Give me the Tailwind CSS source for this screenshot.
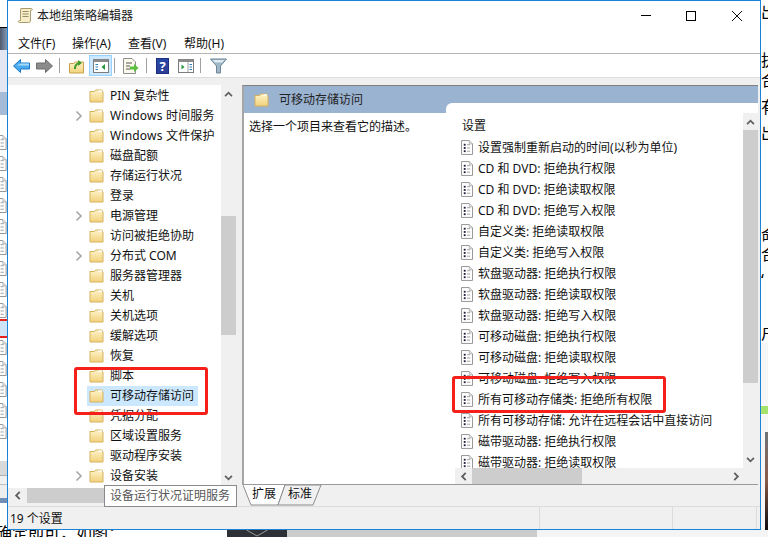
<!DOCTYPE html>
<html lang="zh-CN">
<head>
<meta charset="utf-8">
<script src="https://cdn.jsdelivr.net/npm/@tailwindcss/browser@4"></script>
</head>
<body class="bg-white">
<svg width="0" height="0" class="absolute">
  <defs>
    <linearGradient id="fg" x1="0" y1="0" x2="0" y2="1"><stop offset="0" stop-color="#fdf3c8"/><stop offset="1" stop-color="#f2d27c"/></linearGradient>
    <symbol id="folder" viewBox="0 0 15 14">
      <path d="M1 2.5 L5.5 2.5 L6.5 1 L13 1 L13.5 3 L14 3 L14 13 L1 13 Z" fill="url(#fg)" stroke="#d6b15e" stroke-width="1"/>
      <path d="M9.5 1.2 H13.2 V3 H9 Z" fill="#fff" opacity=".8"/>
    </symbol>
    <symbol id="doc" viewBox="0 0 13 16">
      <path d="M.5.5 H9 L12.5 4 V15.5 H.5 Z" fill="#fff" stroke="#8d8d8d"/>
      <path d="M9 .5 V4 H12.5" fill="#e6e6e6" stroke="#b5b5b5"/>
      <rect x="3" y="4" width="2" height="2" fill="#1e1e3c"/>
      <rect x="3" y="7.5" width="2" height="2" fill="#1e1e3c"/>
      <rect x="3" y="11" width="2" height="2" fill="#1e1e3c"/>
      <path d="M6.5 5 H10 M6.5 8.5 H10 M6.5 12 H10" stroke="#9a9a9a"/>
    </symbol>
    <symbol id="chev" viewBox="0 0 8 12"><path d="M1.5 1.5 L6 6 L1.5 10.5" fill="none" stroke="#a6a6a6" stroke-width="1.6"/></symbol>
    <symbol id="up" viewBox="0 0 10 7"><path d="M1 6 L5 2 L9 6" fill="none" stroke="#5f5f5f" stroke-width="2"/></symbol>
    <symbol id="down" viewBox="0 0 10 7"><path d="M1 1 L5 5 L9 1" fill="none" stroke="#5f5f5f" stroke-width="2"/></symbol>
    <symbol id="left" viewBox="0 0 7 10"><path d="M6 1 L2 5 L6 9" fill="none" stroke="#5f5f5f" stroke-width="2"/></symbol>
    <symbol id="right" viewBox="0 0 7 10"><path d="M1 1 L5 5 L1 9" fill="none" stroke="#5f5f5f" stroke-width="2"/></symbol>
  </defs>
</svg>

<div class="flex flex-col w-[768px] h-[537px] overflow-hidden font-['Noto_Sans','Noto_Sans_CJK_SC',sans-serif] text-[12px] leading-[16px] text-[#111]">
  <div class="flex h-[530px] shrink-0">
    <!-- left sliver -->
    <div class="w-[7px] shrink-0 flex flex-col overflow-hidden">
      <div class="h-[27px] bg-white shrink-0"></div>
      <div class="h-[1px] bg-black shrink-0"></div>
      <div class="h-[22px] bg-gradient-to-r from-[#4e5b6e] to-[#8497b4] shrink-0"></div>
      <div class="h-[42px] bg-[#e4e7f1] shrink-0"></div>
      <div class="h-[23px] bg-[#a5bbd6] shrink-0"></div>
      <div class="h-[20px] bg-white shrink-0"></div>
      <div class="flex flex-col gap-[6px] shrink-0">
        <svg class="w-[13px] h-[15px] -ml-[6px] shrink-0"><use href="#doc"/></svg>
        <svg class="w-[13px] h-[15px] -ml-[6px] shrink-0"><use href="#doc"/></svg>
        <svg class="w-[13px] h-[15px] -ml-[6px] shrink-0"><use href="#doc"/></svg>
        <svg class="w-[13px] h-[15px] -ml-[6px] shrink-0"><use href="#doc"/></svg>
        <svg class="w-[13px] h-[15px] -ml-[6px] shrink-0"><use href="#doc"/></svg>
        <svg class="w-[13px] h-[15px] -ml-[6px] shrink-0"><use href="#doc"/></svg>
        <svg class="w-[13px] h-[15px] -ml-[6px] shrink-0"><use href="#doc"/></svg>
        <svg class="w-[13px] h-[15px] -ml-[6px] shrink-0"><use href="#doc"/></svg>
        <svg class="w-[13px] h-[15px] -ml-[6px] shrink-0"><use href="#doc"/></svg>
      </div>
      <div class="h-[2px] bg-[#e8231c] mt-[1px] shrink-0"></div>
      <div class="h-[15px] bg-[#cfe4f7] shrink-0"></div>
      <div class="h-[2px] bg-[#e8231c] shrink-0"></div>
      <div class="flex flex-col gap-[6px] mt-[2px] shrink-0">
        <svg class="w-[13px] h-[15px] -ml-[6px] shrink-0"><use href="#doc"/></svg>
        <svg class="w-[13px] h-[15px] -ml-[6px] shrink-0"><use href="#doc"/></svg>
        <svg class="w-[13px] h-[15px] -ml-[6px] shrink-0"><use href="#doc"/></svg>
        <svg class="w-[13px] h-[15px] -ml-[6px] shrink-0"><use href="#doc"/></svg>
        <svg class="w-[13px] h-[15px] -ml-[6px] shrink-0"><use href="#doc"/></svg>
      </div>
      <div class="h-[22px] bg-white shrink-0"></div>
      <div class="h-[14px] bg-[#d9d9d9] shrink-0"></div>
      <div class="h-[9px] bg-[#f0f0f0] shrink-0 border-t border-[#b0b0b0]"></div>
      <div class="h-[14px] bg-[#eeeeee] shrink-0 border-t border-[#c0c0c0]"></div>
      <div class="h-[5px] bg-[#6f8fb4] shrink-0"></div>
      <div class="grow bg-white"></div>
    </div>

    <!-- window -->
    <div class="relative z-10 w-[754px] h-[530px] shrink-0 flex flex-col bg-[#f0f0f0] border border-[#1883d7]">
      <!-- title -->
      <div class="h-[29px] bg-white shrink-0 flex items-center pl-[9px]">
        <svg width="17" height="17" viewBox="0 0 17 17" class="shrink-0">
          <path d="M4 1.5 H14.5 C15.5 1.5 15.5 3.5 14.5 3.5 L13.5 3.5 L13.5 13 C13.5 15 12.5 15.5 11.5 15.5 H2.5 C1 15.5 1 13.5 2.5 13.5 H3.5 V3 C3.5 2 3.5 1.5 4 1.5Z" fill="#f5ecc8" stroke="#a89a6a"/>
          <path d="M5.5 4.5 H11.5 M5.5 7 H11.5 M5.5 9.5 H11.5" stroke="#9c8e66"/>
        </svg>
        <span class="ml-[3px] text-[12px] tracking-normal text-[#222]">本地组策略编辑器</span>
        <div class="ml-auto flex items-center">
          <span class="w-[10px] h-[1px] bg-black mr-[35px]"></span>
          <span class="w-[10px] h-[10px] border border-black mr-[36px]"></span>
          <svg width="10" height="10" viewBox="0 0 10 10" class="mr-[18px]"><path d="M0 0 L10 10 M10 0 L0 10" stroke="#111" stroke-width="1"/></svg>
        </div>
      </div>
      <!-- menu -->
      <div class="h-[24px] bg-white shrink-0 flex items-center pl-[10px] pt-[4px] border-b border-[#b4b4b4]">
        <span class="w-[54px]">文件(F)</span>
        <span class="w-[56px]">操作(A)</span>
        <span class="w-[56px]">查看(V)</span>
        <span>帮助(H)</span>
      </div>
      <!-- toolbar -->
      <div class="h-[23px] bg-white shrink-0 flex items-center pl-[5px]">
        <svg width="17" height="14" viewBox="0 0 17 14"><path d="M0.5 7 L7.5 .5 V4 H16.5 V10 H7.5 V13.5 Z" fill="#4aa9ee" stroke="#1b78c8"/><path d="M7.5 4.5 H16 V6.5 H3.5" fill="#a4dbfb"/></svg>
        <svg width="17" height="14" viewBox="0 0 17 14" class="ml-[6px]"><path d="M16.5 7 L9.5 .5 V4 H.5 V10 H9.5 V13.5 Z" fill="#8b8b8b" stroke="#6d6d6d"/></svg>
        <span class="w-[1px] h-[15px] bg-[#a0a0a0] ml-[6px]"></span>
        <svg width="15" height="16" viewBox="0 0 15 16" class="ml-[9px]">
          <path d="M.5 5.5 H5 L6 4 H14.5 V15 H.5 Z" fill="url(#fg)" stroke="#c9a24e"/>
          <path d="M5 11 C5 7 7 5 9 4.5 V2 L13 5 L9 8 V6.5 C8 7 7 8.5 7 11 Z" fill="#3f9b2c"/>
        </svg>
        <div class="ml-[5px] w-[23px] h-[21px] bg-[#cce8ff] border border-[#99d1ff] flex items-center justify-center">
          <svg width="16" height="14" viewBox="0 0 16 14">
            <rect x=".5" y=".5" width="15" height="13" fill="#fff" stroke="#7d7d7d"/>
            <rect x=".5" y=".5" width="15" height="2.5" fill="#8b8b8b"/>
            <path d="M2.5 5.5 H5 M2.5 8 H5 M2.5 10.5 H5" stroke="#2a7fb8"/>
            <path d="M12 5 V11 L8.5 8 Z" fill="#28963c"/>
          </svg>
        </div>
        <span class="w-[1px] h-[15px] bg-[#a0a0a0] ml-[2px]"></span>
        <svg width="16" height="16" viewBox="0 0 16 16" class="ml-[8px]">
          <path d="M.5.5 H9 L12.5 4 V15.5 H.5 Z" fill="#fbf9ec" stroke="#8d8d8d"/>
          <path d="M3 5 H9 M3 8 H7 M3 11 H7" stroke="#555"/>
          <path d="M7 8.5 H11 V6 L15.5 10 L11 14 V11.5 H7 Z" fill="#5cbf3c"/>
        </svg>
        <span class="w-[1px] h-[15px] bg-[#a0a0a0] ml-[7px]"></span>
        <div class="ml-[9px] w-[13px] h-[16px] bg-gradient-to-b from-[#2747a8] to-[#2c3f96] border border-[#1d2f80] text-white font-bold text-[13px] leading-[14px] text-center">?</div>
        <svg width="16" height="14" viewBox="0 0 16 14" class="ml-[9px]">
          <rect x=".5" y=".5" width="15" height="13" fill="#fff" stroke="#7d7d7d"/>
          <rect x=".5" y=".5" width="15" height="2.5" fill="#8b8b8b"/>
          <path d="M3.5 5.5 V10.5 L6.5 8 Z" fill="#28963c"/>
          <path d="M10 3 V13" stroke="#a0a0a0"/>
          <path d="M11.5 5.5 H14 M11.5 8 H14 M11.5 10.5 H14" stroke="#2a7fb8"/>
        </svg>
        <span class="w-[1px] h-[15px] bg-[#a0a0a0] ml-[6px]"></span>
        <svg width="17" height="16" viewBox="0 0 17 16" class="ml-[9px]"><path d="M.5 1 H16.5 L10.5 8 V15 H6.5 V8 Z" fill="#9fb8c9" stroke="#6f8594"/><path d="M2.5 2 H14.5 L12 4.5 H5 Z" fill="#dfeaf1"/></svg>
      </div>
      <!-- band -->
      <div class="h-[8px] bg-[#f0f0f0] border-t border-[#dedede] shrink-0"></div>

      <!-- content -->
      <div class="flex h-[421px] shrink-0">
        <!-- tree -->
        <div class="relative w-[229px] shrink-0 flex flex-col">
          <div class="flex h-[403px] shrink-0">
            <div class="w-[213px] h-[403px] bg-white overflow-hidden shrink-0 pt-[1px]">
              <div class="h-[20px] flex items-center pl-[81px]"><svg class="w-[15px] h-[14px]"><use href="#folder"/></svg><span class="ml-[6px]">PIN 复杂性</span></div>
              <div class="h-[20px] flex items-center pl-[67px]"><svg class="w-[8px] h-[12px] mr-[6px]"><use href="#chev"/></svg><svg class="w-[15px] h-[14px]"><use href="#folder"/></svg><span class="ml-[6px] tracking-[0.2px]">Windows 时间服务</span></div>
              <div class="h-[20px] flex items-center pl-[81px]"><svg class="w-[15px] h-[14px]"><use href="#folder"/></svg><span class="ml-[6px] tracking-[0.2px]">Windows 文件保护</span></div>
              <div class="h-[20px] flex items-center pl-[81px]"><svg class="w-[15px] h-[14px]"><use href="#folder"/></svg><span class="ml-[6px]">磁盘配额</span></div>
              <div class="h-[20px] flex items-center pl-[81px]"><svg class="w-[15px] h-[14px]"><use href="#folder"/></svg><span class="ml-[6px]">存储运行状况</span></div>
              <div class="h-[20px] flex items-center pl-[81px]"><svg class="w-[15px] h-[14px]"><use href="#folder"/></svg><span class="ml-[6px]">登录</span></div>
              <div class="h-[20px] flex items-center pl-[67px]"><svg class="w-[8px] h-[12px] mr-[6px]"><use href="#chev"/></svg><svg class="w-[15px] h-[14px]"><use href="#folder"/></svg><span class="ml-[6px]">电源管理</span></div>
              <div class="h-[20px] flex items-center pl-[81px]"><svg class="w-[15px] h-[14px]"><use href="#folder"/></svg><span class="ml-[6px]">访问被拒绝协助</span></div>
              <div class="h-[20px] flex items-center pl-[67px]"><svg class="w-[8px] h-[12px] mr-[6px]"><use href="#chev"/></svg><svg class="w-[15px] h-[14px]"><use href="#folder"/></svg><span class="ml-[6px]">分布式 COM</span></div>
              <div class="h-[20px] flex items-center pl-[81px]"><svg class="w-[15px] h-[14px]"><use href="#folder"/></svg><span class="ml-[6px]">服务器管理器</span></div>
              <div class="h-[20px] flex items-center pl-[81px]"><svg class="w-[15px] h-[14px]"><use href="#folder"/></svg><span class="ml-[6px]">关机</span></div>
              <div class="h-[20px] flex items-center pl-[81px]"><svg class="w-[15px] h-[14px]"><use href="#folder"/></svg><span class="ml-[6px]">关机选项</span></div>
              <div class="h-[20px] flex items-center pl-[81px]"><svg class="w-[15px] h-[14px]"><use href="#folder"/></svg><span class="ml-[6px]">缓解选项</span></div>
              <div class="h-[20px] flex items-center pl-[81px]"><svg class="w-[15px] h-[14px]"><use href="#folder"/></svg><span class="ml-[6px]">恢复</span></div>
              <div class="h-[20px] flex items-center pl-[81px]"><svg class="w-[15px] h-[14px]"><use href="#folder"/></svg><span class="ml-[6px]">脚本</span></div>
              <div class="h-[20px] flex items-center pl-[81px]"><div class="flex items-center h-[20px] w-[111px] -ml-[2px] pl-[2px] bg-[#cce8ff]"><svg class="w-[15px] h-[14px]"><use href="#folder"/></svg><span class="ml-[6px]">可移动存储访问</span></div></div>
              <div class="h-[20px] flex items-center pl-[81px]"><svg class="w-[15px] h-[14px]"><use href="#folder"/></svg><span class="ml-[6px]">凭据分配</span></div>
              <div class="h-[20px] flex items-center pl-[81px]"><svg class="w-[15px] h-[14px]"><use href="#folder"/></svg><span class="ml-[6px]">区域设置服务</span></div>
              <div class="h-[20px] flex items-center pl-[81px]"><svg class="w-[15px] h-[14px]"><use href="#folder"/></svg><span class="ml-[6px]">驱动程序安装</span></div>
              <div class="h-[20px] flex items-center pl-[67px]"><svg class="w-[8px] h-[12px] mr-[6px]"><use href="#chev"/></svg><svg class="w-[15px] h-[14px]"><use href="#folder"/></svg><span class="ml-[6px]">设备安装</span></div>
            </div>
            <!-- tree vscroll -->
            <div class="w-[15px] bg-[#f0f0f0] flex flex-col shrink-0">
              <div class="h-[17px] flex items-center justify-center shrink-0"><svg class="w-[9px] h-[6px]"><use href="#up"/></svg></div>
              <div class="h-[114px] shrink-0"></div>
              <div class="h-[119px] bg-[#cdcdcd] shrink-0"></div>
              <div class="grow"></div>
              <div class="h-[17px] flex items-center justify-center shrink-0 mb-[2px]"><svg class="w-[9px] h-[6px]"><use href="#down"/></svg></div>
            </div>
          </div>
          <!-- tree hscroll -->
          <div class="h-[15px] flex w-[228px] shrink-0">
            <div class="w-[19px] flex items-center justify-center bg-[#f0f0f0]"><svg class="w-[7px] h-[9px]"><use href="#left"/></svg></div>
            <div class="w-[150px] bg-[#cdcdcd]"></div>
          </div>
          <!-- tooltip -->
          <div class="absolute left-[96px] top-[400px] w-[133px] h-[22px] bg-white border border-[#8a8a8a] text-[#575757] pl-[5px] leading-[20px] whitespace-nowrap">设备运行状况证明服务</div>
        </div>

        <!-- right -->
        <div class="ml-[5px] w-[516px] flex flex-col shrink-0">
          <div class="h-[400px] shrink-0 border-t border-t-[#808080] border-l-2 border-l-[#a6a6a6] border-b border-b-[#9a9a9a] bg-white flex flex-col">
            <div class="h-[27px] bg-[#9ab3d1] shrink-0 flex items-center pl-[10px] pt-[1px]">
              <svg class="w-[15px] h-[14px]"><use href="#folder"/></svg>
              <span class="ml-[10px] text-[#222]">可移动存储访问</span>
            </div>
            <div class="flex grow min-h-0">
              <div class="w-[202px] pl-[5px] pt-[6px] shrink-0">选择一个项目来查看它的描述。</div>
              <div class="relative grow flex flex-col -mt-[10px] bg-white rounded-tl-[6px] min-w-0">
                <div class="flex grow min-h-0">
                  <div class="grow overflow-hidden pl-[15px] pt-[26px] mt-[-11px]">
                    <div class="h-[18px] pl-[1px] text-[12px] mb-[1px]">设置</div>
                    <div class="h-[21px] flex items-center"><svg class="w-[12px] h-[15px] mr-[5px] shrink-0"><use href="#doc"/></svg><span>设置强制重新启动的时间(以秒为单位)</span></div>
                    <div class="h-[21px] flex items-center"><svg class="w-[12px] h-[15px] mr-[5px] shrink-0"><use href="#doc"/></svg><span>CD 和 DVD: 拒绝执行权限</span></div>
                    <div class="h-[21px] flex items-center"><svg class="w-[12px] h-[15px] mr-[5px] shrink-0"><use href="#doc"/></svg><span>CD 和 DVD: 拒绝读取权限</span></div>
                    <div class="h-[21px] flex items-center"><svg class="w-[12px] h-[15px] mr-[5px] shrink-0"><use href="#doc"/></svg><span>CD 和 DVD: 拒绝写入权限</span></div>
                    <div class="h-[21px] flex items-center"><svg class="w-[12px] h-[15px] mr-[5px] shrink-0"><use href="#doc"/></svg><span>自定义类: 拒绝读取权限</span></div>
                    <div class="h-[21px] flex items-center"><svg class="w-[12px] h-[15px] mr-[5px] shrink-0"><use href="#doc"/></svg><span>自定义类: 拒绝写入权限</span></div>
                    <div class="h-[21px] flex items-center"><svg class="w-[12px] h-[15px] mr-[5px] shrink-0"><use href="#doc"/></svg><span>软盘驱动器: 拒绝执行权限</span></div>
                    <div class="h-[21px] flex items-center"><svg class="w-[12px] h-[15px] mr-[5px] shrink-0"><use href="#doc"/></svg><span>软盘驱动器: 拒绝读取权限</span></div>
                    <div class="h-[21px] flex items-center"><svg class="w-[12px] h-[15px] mr-[5px] shrink-0"><use href="#doc"/></svg><span>软盘驱动器: 拒绝写入权限</span></div>
                    <div class="h-[21px] flex items-center"><svg class="w-[12px] h-[15px] mr-[5px] shrink-0"><use href="#doc"/></svg><span>可移动磁盘: 拒绝执行权限</span></div>
                    <div class="h-[21px] flex items-center"><svg class="w-[12px] h-[15px] mr-[5px] shrink-0"><use href="#doc"/></svg><span>可移动磁盘: 拒绝读取权限</span></div>
                    <div class="h-[21px] flex items-center"><svg class="w-[12px] h-[15px] mr-[5px] shrink-0"><use href="#doc"/></svg><span>可移动磁盘: 拒绝写入权限</span></div>
                    <div class="h-[21px] flex items-center"><svg class="w-[12px] h-[15px] mr-[5px] shrink-0"><use href="#doc"/></svg><span>所有可移动存储类: 拒绝所有权限</span></div>
                    <div class="h-[21px] flex items-center"><svg class="w-[12px] h-[15px] mr-[5px] shrink-0"><use href="#doc"/></svg><span>所有可移动存储: 允许在远程会话中直接访问</span></div>
                    <div class="h-[21px] flex items-center"><svg class="w-[12px] h-[15px] mr-[5px] shrink-0"><use href="#doc"/></svg><span>磁带驱动器: 拒绝执行权限</span></div>
                    <div class="h-[21px] flex items-center"><svg class="w-[12px] h-[15px] mr-[5px] shrink-0"><use href="#doc"/></svg><span>磁带驱动器: 拒绝读取权限</span></div>
                  </div>
                  <!-- vscroll -->
                  <div class="w-[15px] bg-[#f0f0f0] flex flex-col shrink-0 mt-[10px]">
                    <div class="h-[17px] flex items-center justify-center shrink-0"><svg class="w-[9px] h-[6px]"><use href="#up"/></svg></div>
                    <div class="h-[253px] bg-[#cdcdcd] shrink-0"></div>
                    <div class="grow"></div>
                    <div class="h-[17px] flex items-center justify-center shrink-0"><svg class="w-[9px] h-[6px]"><use href="#down"/></svg></div>
                  </div>
                </div>
                <!-- hscroll -->
                <div class="h-[16px] ml-[9px] flex shrink-0 bg-[#f0f0f0]">
                  <div class="w-[17px] flex items-center justify-center"><svg class="w-[7px] h-[9px]"><use href="#left"/></svg></div>
                  <div class="w-[110px] bg-[#cdcdcd]"></div>
                  <div class="grow flex items-center justify-end pr-[18px]"><svg class="w-[7px] h-[9px]"><use href="#right"/></svg></div>
                </div>
              </div>
            </div>
          </div>
          <!-- tabs -->
          <div class="relative h-[21px] shrink-0 flex pl-[10px] pt-[1px]">
            <svg width="82" height="21" viewBox="0 0 82 21" class="absolute left-[1px] top-0">
              <path d="M0 0 L8 20 H35 L42 0" fill="#fff" stroke="#8d8d8d"/>
              <path d="M42 0 L35 20 H70 L78 0 Z" fill="#f0f0f0" stroke="#8d8d8d"/>
            </svg>
            <span class="relative w-[36px]">扩展</span>
            <span class="relative">标准</span>
          </div>
        </div>
      </div>

      <!-- status -->
      <div class="grow flex border-t border-[#dcdcdc] items-center">
        <span class="w-[531px] pl-[2px] pt-[2px] shrink-0 text-[12px]">19 个设置</span>
        <span class="w-[133px] h-full border-l border-[#dcdcdc] shrink-0"></span>
        <span class="w-[85px] h-full border-l border-r border-[#dcdcdc] shrink-0"></span>
      </div>
    </div>

    <!-- right sliver -->
    <div class="w-[7px] shrink-0 overflow-hidden flex flex-col text-[16px] leading-[20px] text-black">
      <div class="h-[2px] shrink-0"></div>
      <div class="h-[20px] shrink-0 whitespace-nowrap">出</div>
      <div class="h-[28px] shrink-0"></div>
      <div class="h-[20px] shrink-0 whitespace-nowrap">执</div>
      <div class="h-[20px] shrink-0 whitespace-nowrap">合</div>
      <div class="h-[7px] shrink-0"></div>
      <div class="h-[20px] shrink-0 whitespace-nowrap">有</div>
      <div class="h-[6px] shrink-0"></div>
      <div class="h-[20px] shrink-0 whitespace-nowrap">出</div>
      <div class="h-[82px] shrink-0"></div>
      <div class="h-[19px] shrink-0 whitespace-nowrap">命</div>
      <div class="h-[20px] shrink-0 whitespace-nowrap">合</div>
      <div class="h-[6px] shrink-0"></div>
      <div class="h-[20px] shrink-0 whitespace-nowrap">‘</div>
      <div class="h-[33px] shrink-0"></div>
      <div class="h-[20px] shrink-0 whitespace-nowrap">户</div>
      <div class="h-[63px] shrink-0 bg-[#f6f6f6]"></div>
      <div class="h-[8px] shrink-0 bg-[#a6e36c]"></div>
      <div class="h-[18px] shrink-0 bg-[#f6f6f6]"></div>
      <div class="grow flex justify-end bg-[#f6f6f6]">
        <div class="w-[3px] h-full bg-gradient-to-b from-[#6f7378] via-[#8a5a48] to-[#0e0e0e]"></div>
      </div>
    </div>
  </div>

  <!-- bottom strip -->
  <div class="flex h-[7px] shrink-0">
    <div class="w-[227px] shrink-0 -mt-[7px] text-[16px] leading-[20px] text-black whitespace-nowrap -indent-[4px]">确定即可，如图：</div>
    <div class="w-[60px] bg-[#2d3036] shrink-0 flex justify-center"><svg width="22" height="7" viewBox="0 0 22 7"><path d="M.5 0 L11 6 L21.5 0" fill="none" stroke="#9a9a9a"/></svg></div>
    <div class="w-[250px] bg-[#cbcbcb] shrink-0"></div>
    <div class="grow bg-[#f4f4f4]"></div>
  </div>
</div>

<!-- red annotation frames -->
<div class="absolute left-[74px] top-[367px] w-[134px] h-[48px] border-[3px] border-[#f5201a] rounded-[3px] z-20"></div>
<div class="absolute left-[452px] top-[376px] w-[214px] h-[37px] border-[3px] border-[#f5201a] rounded-[3px] z-20"></div>
</body>
</html>
